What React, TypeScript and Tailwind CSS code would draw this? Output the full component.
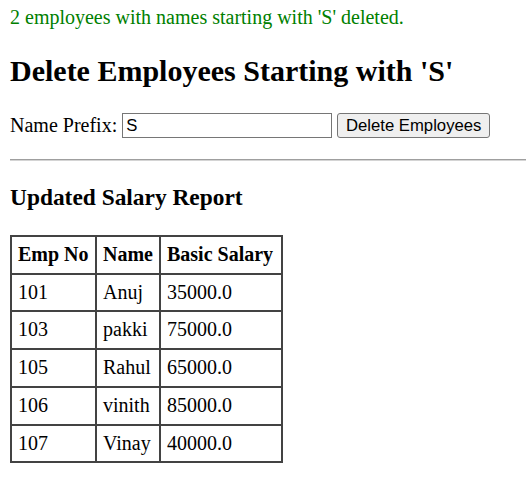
const rows = [
  { no: "101", name: "Anuj", salary: "35000.0" },
  { no: "103", name: "pakki", salary: "75000.0" },
  { no: "105", name: "Rahul", salary: "65000.0" },
  { no: "106", name: "vinith", salary: "85000.0" },
  { no: "107", name: "Vinay", salary: "40000.0" },
];

export default function App() {
  return (
    <div className="min-h-[483px] overflow-hidden bg-white pl-[10px] font-['Liberation_Serif','Times_New_Roman',serif] text-[20px] text-black">
      <p className="pt-[6px] leading-[23px] text-[#008000]">
        2 employees with names starting with 'S' deleted.
      </p>

      <h2 className="mt-[24px] text-[30px] font-bold leading-[35px]">
        Delete Employees Starting with 'S'
      </h2>

      <form className="mt-[25px] flex h-[25px] items-center leading-[23px]">
        <label htmlFor="prefix">Name Prefix:</label>
        <input
          id="prefix"
          defaultValue="S"
          className="ml-[5px] h-[25px] w-[210px] border border-[#767676] bg-white px-[3px] font-['Liberation_Sans',Arial,sans-serif] text-[16.7px] outline-none"
        />
        <button
          type="button"
          className="ml-[5px] h-[25px] w-[153px] rounded-[3px] border border-[#767676] bg-[#efefef] font-['Liberation_Sans',Arial,sans-serif] text-[16.7px] leading-[20px]"
        >
          Delete Employees
        </button>
      </form>

      <div className="mt-[21px] h-[2px] border-t border-b border-t-[#9f9f9f] border-b-[#d4d4d4]" />

      <h3 className="mt-[23px] text-[23.4px] font-bold leading-[27px]">
        Updated Salary Report
      </h3>

      <table className="mt-[24px] w-[271px] table-fixed border-collapse border-2 border-[#434343]">
        <colgroup>
          <col className="w-[85px]" />
          <col className="w-[64px]" />
          <col className="w-[122px]" />
        </colgroup>
        <thead>
          <tr>
            {["Emp No", "Name", "Basic Salary"].map((h) => (
              <th
                key={h}
                className="border-2 border-[#434343] px-[6px] py-[6px] text-left font-bold leading-[23.7px] whitespace-nowrap"
              >
                {h}
              </th>
            ))}
          </tr>
        </thead>
        <tbody>
          {rows.map((r) => (
            <tr key={r.no}>
              <td className="border-2 border-[#434343] px-[6px] py-[6px] leading-[23.7px]">{r.no}</td>
              <td className="border-2 border-[#434343] px-[6px] py-[6px] leading-[23.7px]">{r.name}</td>
              <td className="border-2 border-[#434343] px-[6px] py-[6px] leading-[23.7px]">{r.salary}</td>
            </tr>
          ))}
        </tbody>
      </table>
    </div>
  );
}
